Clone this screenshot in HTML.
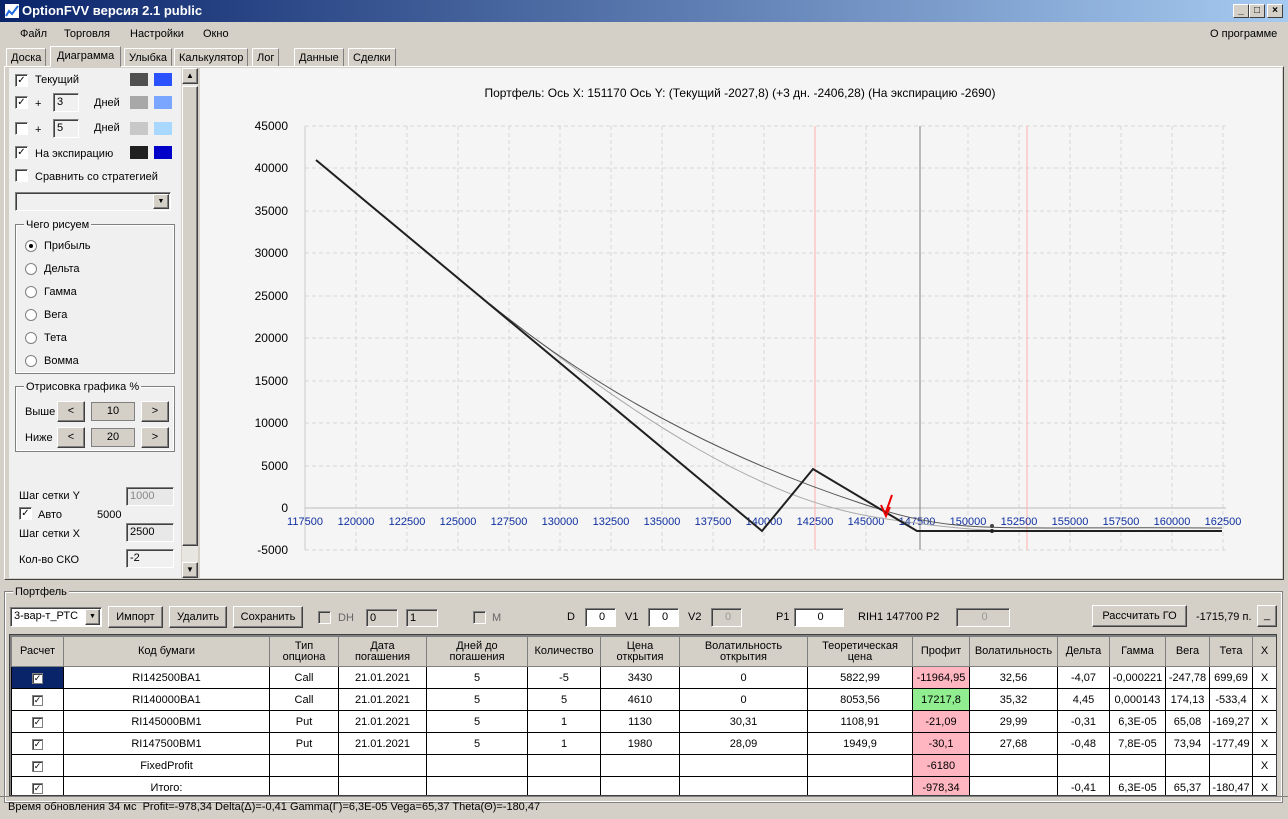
<!DOCTYPE html>
<html><head><meta charset="utf-8"><style>
*{box-sizing:border-box}
body{margin:0;width:1288px;height:819px;overflow:hidden;background:#d4d0c8;font-family:"Liberation Sans",sans-serif;font-size:11px;color:#000;position:relative}
.a{position:absolute}
.title{left:0;top:0;width:1288px;height:22px;background:linear-gradient(90deg,#0a246a,#a6caf0);color:#fff;font-weight:bold;font-size:13px;line-height:22px;padding-left:22px}
.wb{top:4px;width:16px;height:14px;background:#d4d0c8;border:1px solid;border-color:#fff #404040 #404040 #fff;font-size:10px;line-height:11px;text-align:center;color:#000;font-weight:bold}
.menu{top:22px;height:24px;line-height:24px;font-size:11px}
.tab{top:48px;height:19px;border:1px solid;border-color:#fff #808080 #d4d0c8 #fff;line-height:18px;padding:0 4px;font-size:11px;background:#d4d0c8}
.cb{width:13px;height:13px;background:#fff;border:1px solid;border-color:#808080 #fff #fff #808080;box-shadow:inset 1px 1px #404040;font-size:10px;line-height:11px;text-align:center}
.tb{background:#f0f0f0;border:1px solid;border-color:#808080 #fff #fff #808080;box-shadow:inset 1px 1px #404040;padding-left:3px;line-height:16px}
.btn{background:#d4d0c8;border:1px solid;border-color:#fff #404040 #404040 #fff;box-shadow:inset -1px -1px #808080;text-align:center}
.rd{width:12px;height:12px;border-radius:50%;background:#fff;border:1px solid #808080}
.grp{border:1px solid #fff;outline:1px solid #808080}
table{border-collapse:collapse;font-size:11px;table-layout:fixed}
td{border:1px solid #000;text-align:center;height:22px;padding:0;background:#fff;white-space:nowrap;overflow:hidden}
tr.h td{background:#d4d0c8;height:30px;line-height:11px;border-color:#808080}
.pk{background:#ffb6c1}.gn{background:#90ee90}
.tc{display:inline-block;width:11px;height:11px;border:1px solid #808080;box-shadow:inset 1px 1px #404040;font-size:9px;line-height:9px;background:#fff}
</style></head><body>
<div class="a title">OptionFVV версия 2.1 public</div>
<div class="a" style="left:4px;top:3px;width:16px;height:16px;background:#fff;border:1px solid #0a246a"><svg width="14" height="14"><polyline points="1,12 4,7 7,10 13,2" fill="none" stroke="#1e6be0" stroke-width="2"/></svg></div>
<div class="a wb" style="left:1233px">_</div><div class="a wb" style="left:1249px">□</div><div class="a wb" style="left:1267px">×</div>
<div class="a menu" style="left:20px">Файл</div><div class="a menu" style="left:64px">Торговля</div><div class="a menu" style="left:130px">Настройки</div><div class="a menu" style="left:203px">Окно</div><div class="a menu" style="left:1210px">О программе</div>
<div class="a tab" style="left:6px;">Доска</div>
<div class="a tab" style="left:50px;top:46px;height:21px;padding:0 6px;z-index:2">Диаграмма</div>
<div class="a tab" style="left:124px">Улыбка</div><div class="a tab" style="left:174px">Калькулятор</div><div class="a tab" style="left:252px">Лог</div><div class="a tab" style="left:294px">Данные</div><div class="a tab" style="left:348px">Сделки</div>
<div class="a" style="left:4px;top:66px;width:1280px;height:514px;border:1px solid;border-color:#fff #404040 #404040 #fff"></div>
<div class="a" style="left:9px;top:68px;width:172px;height:510px;background:#f0f0f0"></div>
<div class="a" style="left:182px;top:68px;width:16px;height:510px;background:#e8e6e0"></div>
<div class="a btn" style="left:182px;top:68px;width:16px;height:16px;font-size:8px;line-height:14px">▲</div>
<div class="a btn" style="left:182px;top:86px;width:16px;height:460px"></div>
<div class="a btn" style="left:182px;top:562px;width:16px;height:16px;font-size:8px;line-height:14px">▼</div>
<div class="a cb" style="left:15px;top:74px">✓</div><div class="a" style="left:35px;top:74px">Текущий</div>
<div class="a" style="left:130px;top:73px;width:18px;height:13px;background:#505050"></div><div class="a" style="left:154px;top:73px;width:18px;height:13px;background:#2a52ff"></div>
<div class="a cb" style="left:15px;top:96px">✓</div><div class="a" style="left:35px;top:98px">+</div><div class="a tb" style="left:53px;top:93px;width:26px;height:19px">3</div><div class="a" style="left:94px;top:97px">Дней</div>
<div class="a" style="left:130px;top:96px;width:18px;height:13px;background:#a8a8a8"></div><div class="a" style="left:154px;top:96px;width:18px;height:13px;background:#7aa6ff"></div>
<div class="a cb" style="left:15px;top:122px"></div><div class="a" style="left:35px;top:124px">+</div><div class="a tb" style="left:53px;top:119px;width:26px;height:19px">5</div><div class="a" style="left:94px;top:122px">Дней</div>
<div class="a" style="left:130px;top:122px;width:18px;height:13px;background:#c8c8c8"></div><div class="a" style="left:154px;top:122px;width:18px;height:13px;background:#a8d8ff"></div>
<div class="a cb" style="left:15px;top:146px">✓</div><div class="a" style="left:35px;top:148px">На экспирацию</div>
<div class="a" style="left:130px;top:146px;width:18px;height:13px;background:#202020"></div><div class="a" style="left:154px;top:146px;width:18px;height:13px;background:#0000c8"></div>
<div class="a cb" style="left:15px;top:169px"></div><div class="a" style="left:35px;top:171px">Сравнить со стратегией</div>
<div class="a tb" style="left:15px;top:192px;width:156px;height:19px;background:#f0f0f0"></div><div class="a btn" style="left:153px;top:194px;width:16px;height:15px;font-size:7px;line-height:13px">▼</div>
<div class="a grp" style="left:16px;top:225px;width:158px;height:148px"></div><div class="a" style="left:24px;top:219px;background:#f0f0f0;padding:0 2px">Чего рисуем</div>
<div class="a rd" style="left:25px;top:240px"><div style="width:4px;height:4px;background:#000;border-radius:50%;margin:3px"></div></div><div class="a" style="left:44px;top:240px">Прибыль</div>
<div class="a rd" style="left:25px;top:263px"></div><div class="a" style="left:44px;top:263px">Дельта</div>
<div class="a rd" style="left:25px;top:286px"></div><div class="a" style="left:44px;top:286px">Гамма</div>
<div class="a rd" style="left:25px;top:309px"></div><div class="a" style="left:44px;top:309px">Вега</div>
<div class="a rd" style="left:25px;top:332px"></div><div class="a" style="left:44px;top:332px">Тета</div>
<div class="a rd" style="left:25px;top:355px"></div><div class="a" style="left:44px;top:355px">Вомма</div>
<div class="a grp" style="left:16px;top:387px;width:158px;height:64px"></div><div class="a" style="left:24px;top:381px;background:#f0f0f0;padding:0 2px">Отрисовка графика %</div>
<div class="a" style="left:25px;top:406px">Выше</div><div class="a btn" style="left:57px;top:401px;width:28px;height:21px;line-height:19px">&lt;</div><div class="a" style="left:91px;top:402px;width:44px;height:19px;background:#d4d0c8;border:1px solid #808080;text-align:center;line-height:17px">10</div><div class="a btn" style="left:141px;top:401px;width:28px;height:21px;line-height:19px">&gt;</div>
<div class="a" style="left:25px;top:432px">Ниже</div><div class="a btn" style="left:57px;top:427px;width:28px;height:21px;line-height:19px">&lt;</div><div class="a" style="left:91px;top:428px;width:44px;height:19px;background:#d4d0c8;border:1px solid #808080;text-align:center;line-height:17px">20</div><div class="a btn" style="left:141px;top:427px;width:28px;height:21px;line-height:19px">&gt;</div>
<div class="a" style="left:19px;top:490px">Шаг сетки Y</div><div class="a tb" style="left:126px;top:487px;width:48px;height:19px;color:#888;background:#e8e8e8">1000</div>
<div class="a cb" style="left:19px;top:507px">✓</div><div class="a" style="left:38px;top:509px">Авто</div><div class="a" style="left:97px;top:509px">5000</div>
<div class="a" style="left:19px;top:528px">Шаг сетки X</div><div class="a tb" style="left:126px;top:523px;width:48px;height:19px;background:#e8e8e8">2500</div>
<div class="a" style="left:19px;top:554px">Кол-во СКО</div><div class="a tb" style="left:126px;top:549px;width:48px;height:19px">-2</div>
<svg class="a" style="left:200px;top:68px" width="1082" height="510" viewBox="200 68 1082 510">
<rect x="200" y="68" width="1082" height="510" fill="#f5f5f5"/>
<text x="740" y="97" text-anchor="middle" font-size="12" font-family="Liberation Sans">Портфель: Ось X: 151170 Ось Y:  (Текущий -2027,8)  (+3 дн. -2406,28)  (На экспирацию -2690)</text>
<g stroke="#d6d6d6" stroke-dasharray="4,3" stroke-width="1">
<line x1="305" y1="126" x2="1226" y2="126"/><line x1="305" y1="168" x2="1226" y2="168"/><line x1="305" y1="211" x2="1226" y2="211"/><line x1="305" y1="253" x2="1226" y2="253"/><line x1="305" y1="296" x2="1226" y2="296"/><line x1="305" y1="338" x2="1226" y2="338"/><line x1="305" y1="381" x2="1226" y2="381"/><line x1="305" y1="423" x2="1226" y2="423"/><line x1="305" y1="466" x2="1226" y2="466"/><line x1="305" y1="550" x2="1226" y2="550"/>
<line x1="356" y1="126" x2="356" y2="550"/><line x1="407" y1="126" x2="407" y2="550"/><line x1="458" y1="126" x2="458" y2="550"/><line x1="509" y1="126" x2="509" y2="550"/><line x1="560" y1="126" x2="560" y2="550"/><line x1="611" y1="126" x2="611" y2="550"/><line x1="662" y1="126" x2="662" y2="550"/><line x1="713" y1="126" x2="713" y2="550"/><line x1="764" y1="126" x2="764" y2="550"/><line x1="866" y1="126" x2="866" y2="550"/><line x1="968" y1="126" x2="968" y2="550"/><line x1="1019" y1="126" x2="1019" y2="550"/><line x1="1070" y1="126" x2="1070" y2="550"/><line x1="1121" y1="126" x2="1121" y2="550"/><line x1="1172" y1="126" x2="1172" y2="550"/><line x1="1223" y1="126" x2="1223" y2="550"/>
</g>
<line x1="305" y1="126" x2="305" y2="550" stroke="#ccc"/>
<line x1="305" y1="508" x2="1226" y2="508" stroke="#bbb"/>
<line x1="815" y1="126" x2="815" y2="550" stroke="#ffb0b0"/><line x1="1027" y1="126" x2="1027" y2="550" stroke="#ffb0b0"/>
<line x1="920" y1="126" x2="920" y2="550" stroke="#808080"/>
<g font-size="12" text-anchor="end" font-family="Liberation Sans"><text x="288" y="130">45000</text><text x="288" y="172">40000</text><text x="288" y="215">35000</text><text x="288" y="257">30000</text><text x="288" y="300">25000</text><text x="288" y="342">20000</text><text x="288" y="385">15000</text><text x="288" y="427">10000</text><text x="288" y="470">5000</text><text x="288" y="512">0</text><text x="288" y="554">-5000</text></g>
<g font-size="11" text-anchor="middle" fill="#1030a0" font-family="Liberation Sans"><text x="305" y="525">117500</text><text x="356" y="525">120000</text><text x="407" y="525">122500</text><text x="458" y="525">125000</text><text x="509" y="525">127500</text><text x="560" y="525">130000</text><text x="611" y="525">132500</text><text x="662" y="525">135000</text><text x="713" y="525">137500</text><text x="764" y="525">140000</text><text x="815" y="525">142500</text><text x="866" y="525">145000</text><text x="917" y="525">147500</text><text x="968" y="525">150000</text><text x="1019" y="525">152500</text><text x="1070" y="525">155000</text><text x="1121" y="525">157500</text><text x="1172" y="525">160000</text><text x="1223" y="525">162500</text></g>
<path d="M500,312 C640,420 760,500 880,518 S1000,530 1222,531" fill="none" stroke="#a8a8a8" stroke-width="1"/>
<path d="M490,304 C620,410 760,470 860,503 S980,526 1222,528" fill="none" stroke="#555" stroke-width="1"/>
<polyline points="316,160 762,531 813,469 917,531 1222,531" fill="none" stroke="#202020" stroke-width="2"/>
<circle cx="992" cy="526" r="2" fill="#444"/><circle cx="992" cy="531" r="2" fill="#222"/>
<path d="M892,495 L886,512 M881,505 L886,516 L890,507" stroke="#e00" stroke-width="2" fill="none"/>
</svg>
<div class="a" style="left:0;top:581px;width:1288px;height:215px;background:#d4d0c8"></div>
<div class="a grp" style="left:5px;top:592px;width:1277px;height:210px"></div>
<div class="a" style="left:13px;top:586px;background:#d4d0c8;padding:0 2px">Портфель</div>
<div class="a tb" style="left:10px;top:607px;width:92px;height:20px;background:#fff">3-вар-т_РТС</div><div class="a btn" style="left:85px;top:609px;width:15px;height:16px;font-size:7px;line-height:14px">▼</div>
<div class="a btn" style="left:108px;top:606px;width:55px;height:22px;line-height:20px">Импорт</div>
<div class="a btn" style="left:169px;top:606px;width:58px;height:22px;line-height:20px">Удалить</div>
<div class="a btn" style="left:233px;top:606px;width:70px;height:22px;line-height:20px">Сохранить</div>
<div class="a cb" style="left:318px;top:611px;background:#d4d0c8"></div><div class="a" style="left:338px;top:612px;color:#666">DH</div>
<div class="a tb" style="left:366px;top:609px;width:32px;height:18px;background:#d4d0c8">0</div><div class="a tb" style="left:406px;top:609px;width:32px;height:18px;background:#d4d0c8">1</div>
<div class="a cb" style="left:473px;top:611px;background:#d4d0c8"></div><div class="a" style="left:492px;top:612px;color:#666">M</div>
<div class="a" style="left:567px;top:611px">D</div><div class="a tb" style="left:585px;top:608px;width:31px;height:19px;text-align:center;background:#fff">0</div>
<div class="a" style="left:625px;top:611px">V1</div><div class="a tb" style="left:648px;top:608px;width:31px;height:19px;text-align:center;background:#fff">0</div>
<div class="a" style="left:688px;top:611px">V2</div><div class="a tb" style="left:711px;top:608px;width:31px;height:19px;text-align:center;color:#999;background:#d4d0c8">0</div>
<div class="a" style="left:776px;top:611px">P1</div><div class="a tb" style="left:794px;top:608px;width:50px;height:19px;text-align:center;background:#fff">0</div>
<div class="a" style="left:858px;top:611px">RIH1 147700  P2</div><div class="a tb" style="left:956px;top:608px;width:54px;height:19px;text-align:center;color:#999;background:#d4d0c8">0</div>
<div class="a btn" style="left:1092px;top:605px;width:95px;height:22px;line-height:20px">Рассчитать ГО</div>
<div class="a" style="left:1196px;top:611px">-1715,79 п.</div><div class="a btn" style="left:1257px;top:605px;width:20px;height:22px;line-height:18px">_</div>
<div class="a" style="left:9px;top:634px;width:1268px;height:162px;overflow:hidden;border:1px solid #404040;background:#808080">
<table style="width:1266px;margin:1px 0 0 1px">
<colgroup><col style="width:52px"><col style="width:206px"><col style="width:69px"><col style="width:88px"><col style="width:101px"><col style="width:73px"><col style="width:79px"><col style="width:128px"><col style="width:105px"><col style="width:57px"><col style="width:88px"><col style="width:52px"><col style="width:56px"><col style="width:44px"><col style="width:43px"><col style="width:24px"></colgroup>
<tr class="h"><td>Расчет</td><td>Код бумаги</td><td>Тип<br>опциона</td><td>Дата<br>погашения</td><td>Дней до<br>погашения</td><td>Количество</td><td>Цена<br>открытия</td><td>Волатильность<br>открытия</td><td>Теоретическая<br>цена</td><td>Профит</td><td>Волатильность</td><td>Дельта</td><td>Гамма</td><td>Вега</td><td>Тета</td><td>X</td></tr>
<tr><td style="background:#0a246a"><span class="tc">✓</span></td><td>RI142500BA1</td><td>Call</td><td>21.01.2021</td><td>5</td><td>-5</td><td>3430</td><td>0</td><td>5822,99</td><td class="pk">-11964,95</td><td>32,56</td><td>-4,07</td><td>-0,000221</td><td>-247,78</td><td>699,69</td><td>X</td></tr>
<tr><td><span class="tc">✓</span></td><td>RI140000BA1</td><td>Call</td><td>21.01.2021</td><td>5</td><td>5</td><td>4610</td><td>0</td><td>8053,56</td><td class="gn">17217,8</td><td>35,32</td><td>4,45</td><td>0,000143</td><td>174,13</td><td>-533,4</td><td>X</td></tr>
<tr><td><span class="tc">✓</span></td><td>RI145000BM1</td><td>Put</td><td>21.01.2021</td><td>5</td><td>1</td><td>1130</td><td>30,31</td><td>1108,91</td><td class="pk">-21,09</td><td>29,99</td><td>-0,31</td><td>6,3E-05</td><td>65,08</td><td>-169,27</td><td>X</td></tr>
<tr><td><span class="tc">✓</span></td><td>RI147500BM1</td><td>Put</td><td>21.01.2021</td><td>5</td><td>1</td><td>1980</td><td>28,09</td><td>1949,9</td><td class="pk">-30,1</td><td>27,68</td><td>-0,48</td><td>7,8E-05</td><td>73,94</td><td>-177,49</td><td>X</td></tr>
<tr><td><span class="tc">✓</span></td><td>FixedProfit</td><td></td><td></td><td></td><td></td><td></td><td></td><td></td><td class="pk">-6180</td><td></td><td></td><td></td><td></td><td></td><td>X</td></tr>
<tr><td><span class="tc">✓</span></td><td>Итого:</td><td></td><td></td><td></td><td></td><td></td><td></td><td></td><td class="pk">-978,34</td><td></td><td>-0,41</td><td>6,3E-05</td><td>65,37</td><td>-180,47</td><td>X</td></tr>
</table></div>
<div class="a" style="left:0;top:796px;width:1288px;height:23px;border-top:1px solid #808080;line-height:20px;padding-left:8px">Время обновления 34 мс&nbsp; Profit=-978,34 Delta(Δ)=-0,41 Gamma(Γ)=6,3E-05 Vega=65,37 Theta(Θ)=-180,47</div>
</body></html>
